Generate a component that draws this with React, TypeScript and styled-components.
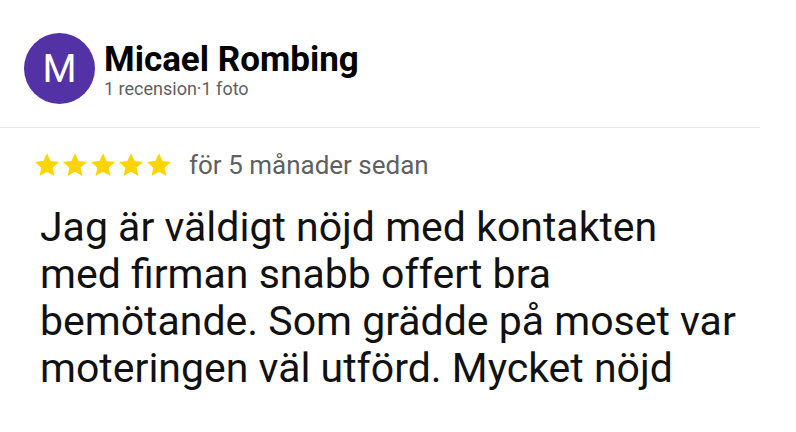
import React from "react";
import styled, { createGlobalStyle } from "styled-components";

const GlobalStyle = createGlobalStyle`
	html, body {
		margin: 0;
		padding: 0;
		background: #ffffff;
		font-family: Roboto, "Liberation Sans", sans-serif;
	}
`;

const Card = styled.div`
	width: 760px;
	display: flex;
	flex-direction: column;
`;

const Header = styled.div`
	display: flex;
	align-items: flex-start;
	gap: 9px;
	padding: 33px 0 23px 24px;
	border-bottom: 1px solid #e6e6e6;
`;

const Avatar = styled.div`
	width: 71px;
	height: 71px;
	border-radius: 50%;
	background: #5332a6;
	color: #ffffff;
	display: flex;
	align-items: center;
	justify-content: center;
	font-size: 39px;
	font-weight: 400;
`;

const Who = styled.div`
	display: flex;
	flex-direction: column;
	margin-top: 8px;
`;

const Name = styled.div`
	font-size: 35px;
	font-weight: 700;
	color: #000000;
	line-height: 38px;
`;

const Meta = styled.div`
	font-size: 18px;
	color: #5f5f5f;
	line-height: 20px;
`;

const Body = styled.div`
	padding: 22px 0 0 34px;
	display: flex;
	flex-direction: column;
	gap: 24px;
`;

const RatingRow = styled.div`
	display: flex;
	align-items: center;
	gap: 17px;
`;

const Stars = styled.div`
	display: flex;
	gap: 2px;
`;

const When = styled.span`
	font-size: 26px;
	line-height: 30px;
	color: #5f5f5f;
`;

const Text = styled.p`
	margin: 0;
	padding-left: 6px;
	font-size: 41px;
	line-height: 47px;
	color: #111111;
	max-width: 702px;
`;

function Star() {
	return (
		<svg width="26" height="26" viewBox="0 0 24 24">
			<path
				fill="#fcd400"
				d="M12 1.2l3.3 7.2 7.8.8-5.9 5.3 1.7 7.7L12 18.2l-6.9 4 1.7-7.7L.9 9.2l7.8-.8z"
			/>
		</svg>
	);
}

export default function App() {
	return (
		<>
			<GlobalStyle />
			<Card>
				<Header>
					<Avatar>M</Avatar>
					<Who>
						<Name>Micael Rombing</Name>
						<Meta>1 recension·1 foto</Meta>
					</Who>
				</Header>
				<Body>
					<RatingRow>
						<Stars>
							{[0, 1, 2, 3, 4].map((i) => (
								<Star key={i} />
							))}
						</Stars>
						<When>för 5 månader sedan</When>
					</RatingRow>
					<Text>
						Jag är väldigt nöjd med kontakten med firman snabb offert bra
						bemötande. Som grädde på moset var moteringen väl utförd. Mycket
						nöjd
					</Text>
				</Body>
			</Card>
		</>
	);
}
